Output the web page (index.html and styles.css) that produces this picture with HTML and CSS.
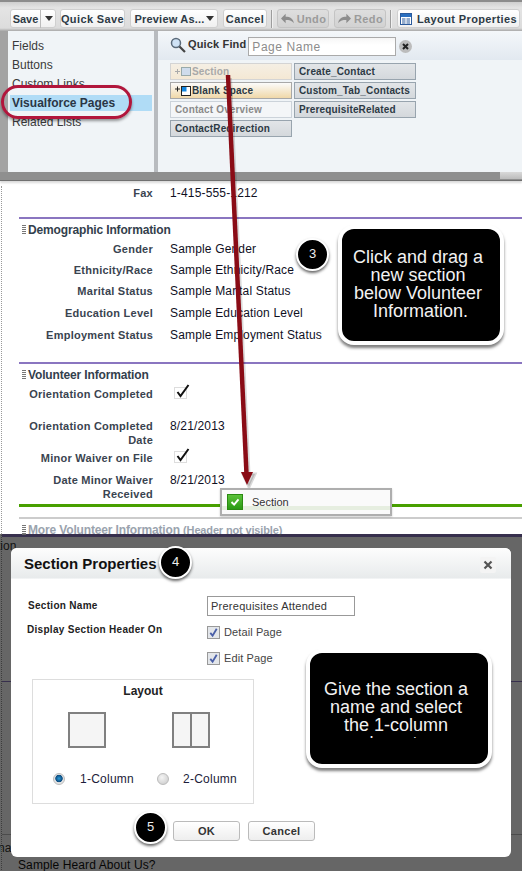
FILE: index.html
```html
<!DOCTYPE html>
<html lang="en">
<head>
<meta charset="utf-8">
<title>Page layout editor</title>
<link rel="stylesheet" href="styles.css">
</head>
<body>
<div class="stage">
  <header class="editor">
    <div class="toolbar">
      <div class="btn btn-save"><span class="save-label">Save</span><span class="caret"></span></div>
      <div class="btn btn-qs">Quick Save</div>
      <div class="btn btn-prev">Preview As...<span class="caret caret-tight"></span></div>
      <div class="btn btn-cancel">Cancel</div>
      <span class="sep"></span>
      <div class="btn btn-off btn-undo">
        <svg class="hist" viewBox="0 0 16 14"><path d="M1 7 L6 2 V5 C11 5 14 7 15 12 C12 9 10 8.500 6 8.500 V12 Z"/></svg>Undo</div>
      <div class="btn btn-off btn-redo">
        <svg class="hist" viewBox="0 0 16 14"><path d="M15 7 L10 2 V5 C5 5 2 7 1 12 C4 9 6 8.500 10 8.500 V12 Z"/></svg>Redo</div>
      <span class="sep"></span>
      <div class="btn btn-lp">
        <svg class="lp-icon" viewBox="0 0 12 12"><rect x=".5" y=".5" width="11" height="11" fill="#fff" stroke="#2a5a9c"/><rect x="1" y="1" width="10" height="3" fill="#2a6fc0"/><path d="M2 6h3.500M6.500 6H10M2 8h3.500M6.500 8H10M2 10h3.500M6.500 10H10" stroke="#2a5a9c"/></svg>Layout Properties</div>
    </div>
    <div class="palette">
      <ul class="cats">
        <li>Fields</li>
        <li>Buttons</li>
        <li>Custom Links</li>
        <li class="cat-on">Visualforce Pages</li>
        <li>Related Lists</li>
      </ul>
      <div class="items">
        <div class="find">
          <svg class="lens" viewBox="0 0 16 16"><circle cx="6" cy="6" r="4.500" fill="#cfe2f5" stroke="#5a6a7a" stroke-width="1.500"/><path d="M9.500 9.500 L15 15" stroke="#444" stroke-width="2.200"/></svg>
          <span class="find-label">Quick Find</span>
          <span class="find-input">Page Name</span>
          <svg class="find-clear" viewBox="0 0 13 13"><circle cx="6.500" cy="6.500" r="6.500" fill="#bcbcbc"/><path d="M4 4 L9 9 M9 4 L4 9" stroke="#222" stroke-width="2"/></svg>
        </div>
        <div class="chips">
          <div class="chip chip-sec-off"><svg class="chip-ic" viewBox="0 0 16 11"><path d="M0 5.500h5M2.500 3v5" stroke="#aaa"/><rect x="6.500" y="1.500" width="9" height="8" fill="#cfdcec" stroke="#9aa"/></svg>Section</div>
          <div class="chip">Create_Contact</div>
          <div class="chip chip-blank"><svg class="chip-ic" viewBox="0 0 16 11"><path d="M0 4h5M2.500 1.500v5" stroke="#222"/><rect x="6.500" y="1.500" width="9" height="9" fill="#fff" stroke="#222"/><rect x="7" y="2" width="4.500" height="4.500" fill="#1487e0"/></svg>Blank Space</div>
          <div class="chip">Custom_Tab_Contacts</div>
          <div class="chip chip-used">Contact Overview</div>
          <div class="chip">PrerequisiteRelated</div>
          <div class="chip">ContactRedirection</div>
        </div>
      </div>
    </div>
    <div class="editor-foot"><span class="scroll-thumb"></span></div>
  </header>

  <main class="page">
    <div class="row row-fax"><span class="lbl">Fax</span><span class="val">1-415-555-1212</span></div>

    <section class="sec sec-demo">
      <h2 class="sec-head"><span class="grip"></span>Demographic Information</h2>
      <div class="row r21"><span class="lbl">Gender</span><span class="val">Sample Gender</span></div>
      <div class="row r21"><span class="lbl">Ethnicity/Race</span><span class="val">Sample Ethnicity/Race</span></div>
      <div class="row r22"><span class="lbl">Marital Status</span><span class="val">Sample Marital Status</span></div>
      <div class="row r22"><span class="lbl">Education Level</span><span class="val">Sample Education Level</span></div>
      <div class="row r22"><span class="lbl">Employment Status</span><span class="val">Sample Employment Status</span></div>
    </section>

    <section class="sec sec-vol">
      <h2 class="sec-head"><span class="grip"></span>Volunteer Information</h2>
      <div class="row r32"><span class="lbl">Orientation Completed</span><span class="val"><svg class="tick" viewBox="0 0 16 15"><rect x=".5" y="3.500" width="12" height="11" fill="none" stroke="#bbb" stroke-dasharray="1 1"/><path d="M3.500 8 L6.500 12 L14.500 1" fill="none" stroke="#111" stroke-width="2"/></svg></span></div>
      <div class="row r32"><span class="lbl">Orientation Completed<br>Date</span><span class="val">8/21/2013</span></div>
      <div class="row r22"><span class="lbl">Minor Waiver on File</span><span class="val"><svg class="tick" viewBox="0 0 16 15"><rect x=".5" y="3.500" width="12" height="11" fill="none" stroke="#bbb" stroke-dasharray="1 1"/><path d="M3.500 8 L6.500 12 L14.500 1" fill="none" stroke="#111" stroke-width="2"/></svg></span></div>
      <div class="row r28"><span class="lbl">Date Minor Waiver<br>Received</span><span class="val">8/21/2013</span></div>
    </section>
    <div class="drop-line"></div>
    <section class="sec-more">
      <h2 class="sec-head sec-head-more"><span class="grip"></span>More Volunteer Information <small>(Header not visible)</small></h2>
    </section>
    <div class="under-rule"></div>
    <div class="under-tion">tion</div>
    <div class="under-purple"></div>
    <div class="under-grey"></div>
    <div class="under-nat">nat</div>
    <div class="under-sample">Sample Heard About Us?</div>
  </main>

  <div class="pill"></div>
  <svg class="arrow" viewBox="0 0 522 871">
    <path class="arrow-shadow" d="M230.500 78 L249 474 M243 474 L255 474 L249 487 Z"/>
    <path class="arrow-line" d="M228 75 L246.500 474"/>
    <path class="arrow-head" d="M241 472 L253 472 L247 485 Z"/>
  </svg>
  <div class="drag-tip"><span class="tip-check"><svg viewBox="0 0 16 16"><path d="M4 8 L7 11 L12 5" fill="none" stroke="#fff" stroke-width="2.200"/></svg></span>Section</div>
  <div class="badge badge-3">3</div>
  <div class="note note-drag"><p>Click and drag a<br>new section<br>below Volunteer<br>&nbsp;Information.</p></div>

  <div class="overlay">
    <div class="modal">
      <div class="modal-head">
        <h1 class="modal-title">Section Properties</h1>
        <span class="modal-close"><svg viewBox="0 0 16 16"><path d="M4.500 4.500 L11.500 11.500 M11.500 4.500 L4.500 11.500" stroke="#555" stroke-width="2.200"/></svg></span>
      </div>
      <div class="modal-body">
        <div class="form-top">
          <div class="labels">
            <div class="f-label f-label-name">Section Name</div>
            <div class="f-label f-label-display">Display Section Header On</div>
          </div>
          <div class="fields">
            <div class="name-input">Prerequisites Attended</div>
            <div class="check-row"><span class="cb"><svg viewBox="0 0 12 12"><path d="M2.500 6.500 L5 9.500 L9.500 2" fill="none" stroke="#4a5fa8" stroke-width="2"/></svg></span>Detail Page</div>
            <div class="check-row"><span class="cb"><svg viewBox="0 0 12 12"><path d="M2.500 6.500 L5 9.500 L9.500 2" fill="none" stroke="#4a5fa8" stroke-width="2"/></svg></span>Edit Page</div>
          </div>
        </div>
        <div class="layout-box">
          <div class="layout-title">Layout</div>
          <div class="layout-grid">
            <div class="col-opt">
              <div class="pic"></div>
              <div class="opt"><span class="radio radio-on"></span>1-Column</div>
            </div>
            <div class="col-opt">
              <div class="pic pic-two"><span></span></div>
              <div class="opt"><span class="radio"></span>2-Column</div>
            </div>
          </div>
        </div>
        <div class="actions">
          <div class="mbtn">OK</div>
          <div class="mbtn">Cancel</div>
        </div>
      </div>
    </div>
    <div class="badge badge-4">4</div>
    <div class="badge badge-5">5</div>
    <div class="note note-give"><p>Give the section a<br>name and select<br>the 1-column<br>layout.</p></div>
  </div>
</div>
</body>
</html>
```

FILE: styles.css
```css
* { box-sizing: border-box; }
html, body { margin: 0; padding: 0; background: #fff; }
body { font-family: "Liberation Sans", Arial, sans-serif; color: #222; }
.stage { position: relative; width: 522px; height: 871px; overflow: hidden; }

/* editor */
.editor { height: 181px; background: #a3a3a3; border-top: 2px solid #8c8c8c; display: flex; flex-direction: column; box-shadow: 0 2px 2px rgba(0,0,0,.15); position: relative; }
.toolbar { height: 29px; padding: 7px 0 0 10px; display: flex; align-items: flex-start; background: linear-gradient(#cfcfcf, #e4e4e4 20%, #dcdcdc 90%, #a8a8a8); }
.btn { height: 19px; line-height: 18px; font-size: 11px; font-weight: bold; color: #2d3a45; letter-spacing: .38px; background: linear-gradient(#fff, #f0f0f0); border: 1px solid #cfcfcf; border-radius: 3px; white-space: nowrap; display: flex; align-items: center; justify-content: center; }
.btn-save { width: 46px; }
.save-label { padding-right: 2px; border-right: 1px solid #bbb; margin-right: 4px; letter-spacing: 0; }
.btn-qs { width: 65px; margin-left: 4px; }
.btn-prev { width: 88px; margin-left: 5px; letter-spacing: .2px; }
.btn-cancel { width: 44px; margin-left: 5px; }
.btn-undo { width: 52px; margin-left: 4px; }
.btn-redo { width: 52px; margin-left: 5px; }
.btn-lp { width: 123px; margin-left: 5px; }
.btn-off { color: #9b9b9b; background: linear-gradient(#dedede, #d2d2d2); border-color: #c4c4c4; }
.caret { width: 0; height: 0; border: 4px solid transparent; border-top: 5px solid #333; border-bottom: 0; }
.caret-tight { margin-left: 1px; }
.sep { width: 2px; height: 18px; margin: 1px 0 0 4px; background: #9d9d9d; border-right: 1px solid #f0f0f0; }
.hist { width: 15px; height: 13px; margin-right: 2px; fill: #8d8d8d; }
.lp-icon { width: 12px; height: 12px; margin-right: 5px; }

.palette { height: 141px; margin-left: 8px; display: flex; gap: 4px; background: #b8bbbf; }
.cats { width: 146px; margin: 0; padding: 6px 2px 0 4px; list-style: none; background: #f0f4f7; font-size: 12px; color: #3a3a3a; line-height: 19px; }
.cats li { height: 19px; }
.cats .cat-on { font-weight: bold; background: #b0dcf6; height: 16px; margin: 1px 0 2px -2px; padding-left: 2px; line-height: 16px; color: #2a3645; }
.items { flex: 1; background: #f0f4f7; }
.find { height: 29px; padding: 6px 0 0 12px; display: flex; align-items: flex-start; background: linear-gradient(#f4f7fa, #e2e9f0); }
.lens { width: 16px; height: 16px; }
.find-label { font-size: 11px; font-weight: bold; letter-spacing: .15px; color: #333; margin: 0 0 0 2px; line-height: 15px; }
.find-input { width: 148px; height: 19px; margin-left: 2px; padding-left: 3px; background: linear-gradient(#f6f6f6, #fff 40%); border: 1px solid #aaa; font-size: 12px; line-height: 18px; color: #8c8c8c; letter-spacing: .55px; }
.find-clear { width: 13px; height: 13px; margin: 3px 0 0 3px; }
.chips { display: grid; grid-template-columns: 122px 122px; gap: 2px; padding: 3px 0 0 12px; }
.chip { height: 17px; padding-left: 4px; font-size: 10px; font-weight: bold; letter-spacing: .15px; line-height: 15px; color: #2d3a45; background: linear-gradient(#e2e5e8, #d4d8dc); border: 1px solid #98a4ae; display: flex; align-items: center; white-space: nowrap; }
.chip-sec-off { color: #a9a9a9; background: linear-gradient(#f5efe4, #f4e8d4); border-color: #d4d4d4; }
.chip-blank { background: linear-gradient(#fbfbfb, #f0d8a8); border-color: #a8a8a8; }
.chip-used { color: #8a8a8a; background: #f4f6f8; border-color: #ccd3da; }
.chip-ic { width: 16px; height: 11px; margin-right: 1px; flex: none; }
.editor-foot { height: 9px; background: #8f8f8f; border-bottom: 1px solid #707070; display: flex; justify-content: flex-end; }
.scroll-thumb { width: 22px; height: 7px; background: linear-gradient(#d9d9d9, #bcbcbc); }

/* page */
.page { position: relative; height: 690px; border-left: 1px dotted #999; margin-left: 1px; font-size: 12px; color: #111; }
.row { display: grid; grid-template-columns: 151px 1fr; column-gap: 17px; line-height: 14px; }
.lbl { font-size: 11px; font-weight: bold; text-align: right; color: #3a4450; letter-spacing: .25px; }
.val { color: #10101f; letter-spacing: .16px; font-size: 12px; }
.row-fax { margin-top: 5px; }
.sec { margin-left: 17px; border-top: 2px solid #8a75c0; }
.sec .row { margin-left: -17px; }
.sec-demo { margin-top: 17px; height: 145px; padding-top: 4px; }
.sec-vol { height: 143px; padding-top: 4px; }
.sec-head { margin: 0; font-size: 12px; font-weight: bold; color: #33404c; line-height: 14px; height: 19px; letter-spacing: -.15px; padding-left: 9px; position: relative; }
.grip { position: absolute; left: 3px; top: 2px; width: 4px; height: 10px; background: repeating-linear-gradient(#777 0 1px, #fff 1px 2px); }
.r21 { height: 21px; }
.r22 { height: 22px; }
.r32 { height: 32px; }
.r28 { height: 28px; }
.tick { display: block; width: 16px; height: 15px; margin: -3px 0 0 4px; }
.drop-line { height: 3px; margin-left: 17px; background: #48a000; margin-top: -1px; }
.sec-more { margin: 10px 0 0 17px; border-top: 2px solid #ccc; padding-top: 4px; }
.sec-head-more { color: #9aa3ae; }
.sec-head-more small { font-size: 11px; }
.under-rule { height: 3px; background: #8a75c0; margin-top: -8px; }
.under-tion { margin: 2px 0 0 -5px; font-size: 12px; line-height: 14px; color: #333; }
.under-purple { height: 1px; background: #8a75c0; margin-top: 128px; }
.under-grey { height: 1px; background: #bbb; margin-top: 152px; }
.under-nat { font-size: 12px; line-height: 14px; margin: 6px 0 0 -4px; color: #333; }
.under-sample { margin: 3px 0 0 16px; line-height: 14px; color: #111; letter-spacing: .1px; }

/* overlays */
.pill { position: absolute; left: 1px; top: 85px; width: 131px; height: 34px; border: 3px solid #b1163c; border-radius: 17px; box-shadow: 0 2px 3px rgba(0,0,0,.4); }
.arrow { position: absolute; left: 0; top: 0; width: 522px; height: 871px; pointer-events: none; }
.arrow-line { stroke: #8a0c16; stroke-width: 4.500; fill: none; }
.arrow-head { fill: #8a0c16; }
.arrow-shadow { stroke: rgba(0,0,0,.15); stroke-width: 3; fill: rgba(0,0,0,.15); }
.drag-tip { position: absolute; left: 220px; top: 488px; width: 172px; height: 28px; display: flex; align-items: center; gap: 9px; padding-left: 5px; background: linear-gradient(#fafafa 65%, #e6eee0 65%, #e6eee0 85%, #fafafa 85%); border: 2px solid #aeaeae; font-size: 11px; color: #333; box-shadow: 0 1px 2px rgba(0,0,0,.2); }
.tip-check { width: 16px; height: 16px; background: linear-gradient(#5cc23a, #2a9a14); border: 1px solid #2b8a12; }
.tip-check svg { display: block; width: 14px; height: 14px; }
.badge { position: absolute; width: 33px; height: 33px; border-radius: 50%; background: #000; border: 2px solid #fff; color: #eee; font-size: 13px; line-height: 27px; text-align: center; box-shadow: 0 2px 3px rgba(0,0,0,.6); }
.badge-3 { left: 296px; top: 238px; }
.note { position: absolute; background: #000; border: 4px solid #fff; border-radius: 16px; box-shadow: 0 3px 3px rgba(0,0,0,.5); color: #f2f2f2; font-size: 18px; line-height: 18px; text-align: center; }
.note p { margin: 0; overflow: hidden; padding-right: 6px; }
.note-drag { left: 338px; top: 225px; width: 166px; height: 120px; padding-top: 19px; }
.overlay { position: absolute; left: 0; top: 534px; width: 522px; height: 337px; background: rgba(0,0,0,.6); }
.modal { position: absolute; left: 11px; top: 14px; width: 500px; height: 309px; background: #fff; border-radius: 6px; overflow: hidden; }
.modal-head { height: 35px; display: flex; justify-content: space-between; align-items: flex-start; padding: 7px 15px 0 13px; background: linear-gradient(#fdfdfd, #e8ebec 85%, #fff 90%); }
.modal-title { margin: 0; font-size: 15px; line-height: 18px; font-weight: bold; color: #111; }
.modal-close { width: 16px; height: 16px; margin-top: 2px; background: #f4f4f4; border-radius: 2px; }
.modal-close svg { display: block; width: 16px; height: 16px; }
.modal-body { padding: 13px 0 0 16px; }
.form-top { display: flex; height: 83px; }
.labels { width: 180px; }
.f-label { font-size: 10px; font-weight: bold; color: #222; letter-spacing: .3px; line-height: 12px; }
.f-label-name { padding: 4px 0 0 1px; }
.f-label-display { margin-top: 12px; }
.name-input { width: 148px; height: 20px; border: 1px solid #999; padding-left: 3px; font-size: 11px; line-height: 18px; color: #333; letter-spacing: .25px; }
.check-row { display: flex; align-items: center; gap: 4px; height: 14px; font-size: 11px; color: #444; letter-spacing: .1px; margin-top: 9px; }
.check-row + .check-row { margin-top: 12px; }
.cb { width: 13px; height: 13px; border: 1px solid #999; background: #e3e6ea; }
.cb svg { display: block; width: 11px; height: 11px; }
.layout-box { width: 222px; height: 125px; margin-left: 5px; border: 1px solid #ddd; }
.layout-title { font-size: 12px; font-weight: bold; line-height: 14px; text-align: center; margin-top: 4px; color: #222; }
.layout-grid { display: flex; padding: 14px 0 0 35px; gap: 66px; }
.col-opt { width: 38px; }
.pic { width: 38px; height: 36px; border: 2px solid #808080; background: #f5f5f5; }
.pic-two span { display: block; width: 2px; height: 100%; margin-left: 16px; background: #808080; }
.opt { display: flex; align-items: center; margin: 24px 0 0 -15px; font-size: 12px; color: #1c1c3a; letter-spacing: .25px; white-space: nowrap; line-height: 14px; }
.radio { width: 12px; height: 12px; border-radius: 50%; border: 1px solid #bbb; background: radial-gradient(circle at 40% 35%, #f4f4f4, #c8c8c8); margin-right: 15px; flex: none; }
.radio-on { background: radial-gradient(circle at 50% 45%, #2a9ad8 0, #0c4c80 45%, #e4e4e4 55%); }
.col-opt + .col-opt .radio { margin-right: 14px; }
.actions { display: flex; gap: 8px; margin: 17px 0 0 146px; }
.mbtn { width: 67px; height: 20px; font-size: 11px; font-weight: bold; line-height: 18px; text-align: center; color: #333; background: linear-gradient(#fff, #eee); border: 1px solid #bbb; border-radius: 3px; letter-spacing: .3px; }
.badge-4 { left: 159px; top: 12px; }
.badge-5 { left: 134px; top: 277px; }
.note-give { left: 306px; top: 115px; width: 186px; height: 119px; padding-top: 27px; }
.note-give p { height: 58px; }
```
